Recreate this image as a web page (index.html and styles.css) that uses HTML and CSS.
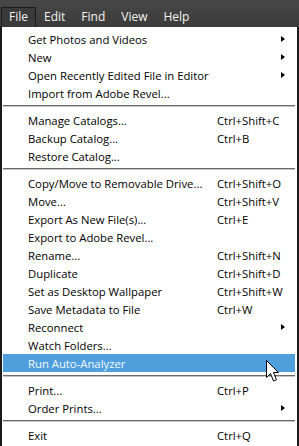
FILE: index.html
```html
<!DOCTYPE html>
<html lang="en">
<head>
    <meta charset="UTF-8">
    <meta name="viewport" content="width=device-width, initial-scale=1.0">
    <title>File menu</title>
    <link rel="stylesheet" href="styles.css">
</head>
<body>
    <div class="menubar">
        <div class="tab active">File</div>
        <div class="tab">Edit</div>
        <div class="tab">Find</div>
        <div class="tab">View</div>
        <div class="tab">Help</div>
    </div>
    <div class="dropdown">
        <div class="item"><span class="label">Get Photos and Videos</span><span class="key"></span><span class="arrow"></span></div>
        <div class="item"><span class="label">New</span><span class="key"></span><span class="arrow"></span></div>
        <div class="item"><span class="label">Open Recently Edited File in Editor</span><span class="key"></span><span class="arrow"></span></div>
        <div class="item"><span class="label">Import from Adobe Revel...</span></div>
        <div class="sep"></div>
        <div class="item"><span class="label">Manage Catalogs...</span><span class="key">Ctrl+Shift+C</span></div>
        <div class="item"><span class="label">Backup Catalog...</span><span class="key">Ctrl+B</span></div>
        <div class="item"><span class="label">Restore Catalog...</span></div>
        <div class="sep"></div>
        <div class="item"><span class="label">Copy/Move to Removable Drive...</span><span class="key">Ctrl+Shift+O</span></div>
        <div class="item"><span class="label">Move...</span><span class="key">Ctrl+Shift+V</span></div>
        <div class="item"><span class="label">Export As New File(s)...</span><span class="key">Ctrl+E</span></div>
        <div class="item"><span class="label">Export to Adobe Revel...</span></div>
        <div class="item"><span class="label">Rename...</span><span class="key">Ctrl+Shift+N</span></div>
        <div class="item"><span class="label">Duplicate</span><span class="key">Ctrl+Shift+D</span></div>
        <div class="item"><span class="label">Set as Desktop Wallpaper</span><span class="key">Ctrl+Shift+W</span></div>
        <div class="item"><span class="label">Save Metadata to File</span><span class="key">Ctrl+W</span></div>
        <div class="item"><span class="label">Reconnect</span><span class="key"></span><span class="arrow"></span></div>
        <div class="item"><span class="label">Watch Folders...</span></div>
        <div class="item hover"><span class="label">Run Auto-Analyzer</span></div>
        <div class="sep"></div>
        <div class="item"><span class="label">Print...</span><span class="key">Ctrl+P</span></div>
        <div class="item"><span class="label">Order Prints...</span><span class="key"></span><span class="arrow"></span></div>
        <div class="sep"></div>
        <div class="item"><span class="label">Exit</span><span class="key">Ctrl+Q</span></div>
    </div>
    <svg class="cursor" width="14" height="24" viewBox="0 0 14 24">
        <path d="M0.5 0.5 L0.5 17.5 L4.5 13.5 L7.5 21 L10.5 19.8 L7.5 12.5 L12.5 12.5 Z" fill="#fff" stroke="#000" stroke-width="1" stroke-linejoin="miter"/>
    </svg>
</body>
</html>
```

FILE: styles.css
```css
html, body { margin: 0; padding: 0; }
body { width: 299px; height: 446px; overflow: hidden; background: #fff; font-family: "Open Sans", "Noto Sans", sans-serif; position: relative; }

.menubar {
    height: 27px; display: flex; align-items: flex-end; padding-left: 1px;
    background: linear-gradient(#474747, #3b3b3b);
}
.tab {
    height: 19px; line-height: 18px; padding: 0 7px; border: 1px solid transparent; border-bottom: none;
    color: #f2f2f2; font-size: 12px;
}
.tab.active { border-color: #1b1b1b; background: #3a3a3a; }

.dropdown {
    border-left: 2px solid #1a1a1a; border-right: 2px solid #1a1a1a;
    padding: 3px 2px 4px 1px; height: 416px;
}
.item {
    display: flex; align-items: center; height: 18px; padding: 0 10px 0 25px;
    font-size: 11.3px; color: #000; white-space: nowrap;
}
.item .label { width: 189px; flex: none; }
.item .key { flex: 1; }
.item .arrow { width: 0; height: 0; border-left: 4px solid #000; border-top: 3px solid transparent; border-bottom: 3px solid transparent; }
.item.hover { background: #4f9fdc; color: #f4f8fc; }
.sep { height: 1px; border-bottom: 1px solid #c4c4c4; background: #6a6a6a; margin: 3px 0 4px; }

.cursor { position: absolute; left: 266px; top: 360px; }
```
